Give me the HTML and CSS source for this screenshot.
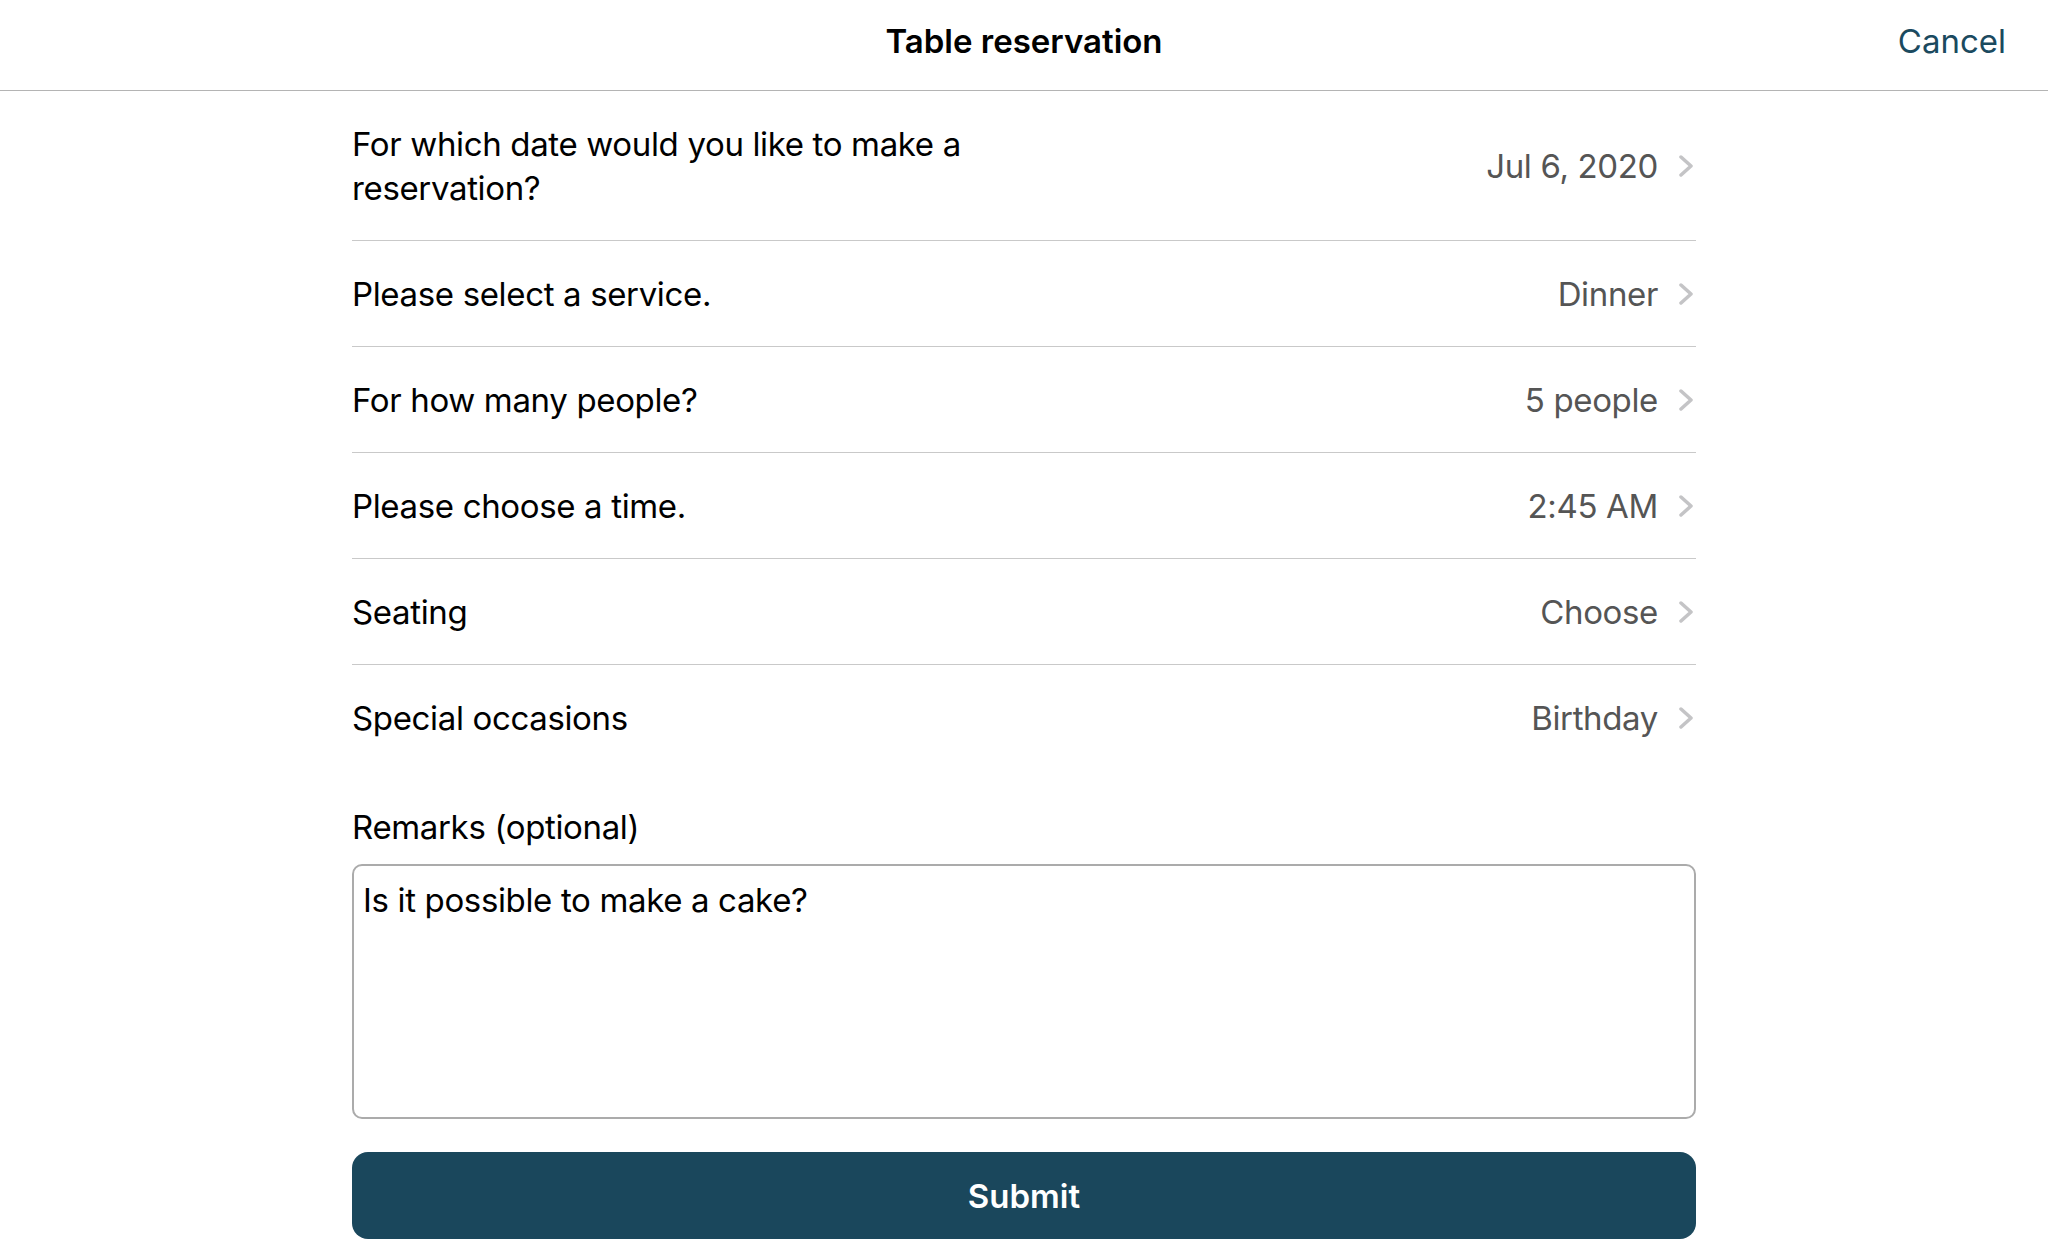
FILE: index.html
```html
<!DOCTYPE html>
<html lang="en">
<head>
  <meta charset="UTF-8">
  <meta name="viewport" content="width=device-width, initial-scale=1.0">
  <title>Table reservation</title>
  <link rel="stylesheet" href="styles.css">
</head>
<body>
  <header class="nav-bar">
    <h1>Table reservation</h1>
    <a class="cancel" href="#">Cancel</a>
  </header>

  <main class="form-container">
    <div class="rows">
      <div class="row">
        <span class="row-label">For which date would you like to make a reservation?</span>
        <span class="row-value">Jul 6, 2020</span>
        <svg class="chevron" viewBox="0 0 14 22"><path d="M2 2l10 9-10 9"/></svg>
      </div>
      <div class="row">
        <span class="row-label">Please select a service.</span>
        <span class="row-value">Dinner</span>
        <svg class="chevron" viewBox="0 0 14 22"><path d="M2 2l10 9-10 9"/></svg>
      </div>
      <div class="row">
        <span class="row-label">For how many people?</span>
        <span class="row-value">5 people</span>
        <svg class="chevron" viewBox="0 0 14 22"><path d="M2 2l10 9-10 9"/></svg>
      </div>
      <div class="row">
        <span class="row-label">Please choose a time.</span>
        <span class="row-value">2:45 AM</span>
        <svg class="chevron" viewBox="0 0 14 22"><path d="M2 2l10 9-10 9"/></svg>
      </div>
      <div class="row">
        <span class="row-label">Seating</span>
        <span class="row-value">Choose</span>
        <svg class="chevron" viewBox="0 0 14 22"><path d="M2 2l10 9-10 9"/></svg>
      </div>
      <div class="row">
        <span class="row-label">Special occasions</span>
        <span class="row-value">Birthday</span>
        <svg class="chevron" viewBox="0 0 14 22"><path d="M2 2l10 9-10 9"/></svg>
      </div>
    </div>

    <label for="remarks" class="remarks-label">Remarks (optional)</label>
    <textarea id="remarks" name="remarks">Is it possible to make a cake?</textarea>

    <button type="submit">Submit</button>
  </main>
</body>
</html>
```

FILE: styles.css
```css
body {
  font-family: Inter, "Noto Sans", sans-serif;
  margin: 0;
  background-color: #fff;
  color: #000;
  letter-spacing: -0.35px;
}

.nav-bar {
  height: 90px;
  border-bottom: 1px solid #b4b4b4;
  display: flex;
  align-items: center;
  justify-content: center;
  position: relative;
}

.nav-bar h1 {
  margin: 0 0 8px;
  font-size: 33px;
  font-weight: 600;
  letter-spacing: 0;
}

.cancel {
  position: absolute;
  right: 42px;
  top: 21px;
  font-size: 33px;
  color: #1b4a5f;
  text-decoration: none;
  letter-spacing: 0;
}

.form-container {
  width: 1344px;
  margin: 0 auto;
}

.rows {
  margin-top: -1px;
  border-top: 1px solid #8c8c8c;
}

.row {
  display: flex;
  align-items: center;
  padding: 31px 0 30px;
  border-bottom: 1px solid #c9c9c9;
  font-size: 33px;
  line-height: 44px;
}

.row:last-child {
  border-bottom: none;
}

.row-label {
  flex: 1;
  max-width: 640px;
  margin-right: auto;
}

.row-value {
  color: #555;
}

.chevron {
  width: 14px;
  height: 22px;
  margin: 0 3px 0 21px;
  fill: none;
  stroke: #c4c4c6;
  stroke-width: 3.5;
  stroke-linecap: round;
  stroke-linejoin: round;
}

.remarks-label {
  display: block;
  margin-top: 35px;
  font-size: 33px;
  line-height: 44px;
}

textarea {
  display: block;
  box-sizing: border-box;
  width: 100%;
  height: 255px;
  margin-top: 15px;
  padding: 12px 9px;
  border: 2px solid #ababab;
  border-radius: 10px;
  font-family: inherit;
  font-size: 33px;
  line-height: 44px;
  letter-spacing: -0.35px;
  color: #000;
  resize: none;
}

button {
  display: block;
  width: 100%;
  height: 87px;
  margin-top: 33px;
  border: none;
  border-radius: 16px;
  background-color: #1a475c;
  color: #fff;
  font-family: inherit;
  font-size: 33px;
  font-weight: 600;
  cursor: pointer;
}
```
